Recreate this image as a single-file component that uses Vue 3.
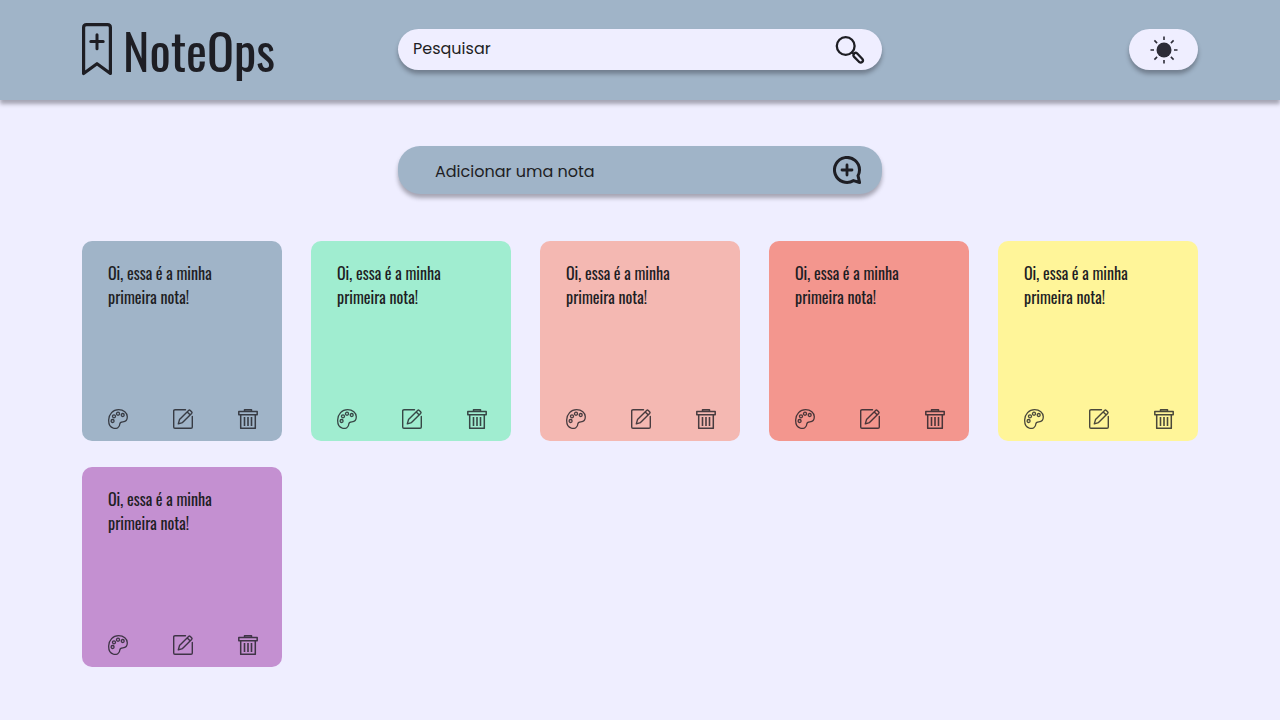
<script setup>
import { ref } from 'vue'

const search = ref('')
const colors = ['blue', 'green', 'pink', 'red', 'yellow', 'purple']
const notes = ref(colors.map((color, i) => ({ id: i + 1, color, text: 'Oi, essa é a minha primeira nota!' })))

function removeNote(id) {
  notes.value = notes.value.filter((note) => note.id !== id)
}
</script>

<template>
  <div class="page">
    <header class="header">
      <a class="brand" href="#">
        <svg class="brand-mark" viewBox="0 0 30 54" fill="none" stroke="currentColor" stroke-linejoin="round" stroke-linecap="round" aria-hidden="true">
          <path d="M1.600 50.500V4.600q0-3 3-3h20.800q3 0 3 3v45.900L15 40.700Z" stroke-width="3.200" />
          <path d="M15 11.700v14M8.800 18.500h12.400" stroke-width="3" />
        </svg>
        <span class="brand-name">NoteOps</span>
      </a>
      <form class="search" role="search" @submit.prevent>
        <input v-model="search" type="text" placeholder="Pesquisar" aria-label="Pesquisar" />
        <button type="submit" aria-label="Buscar">
          <svg width="30" height="30" viewBox="0 0 30 30" fill="none" stroke="currentColor" stroke-width="2.300" stroke-linecap="round" stroke-linejoin="round" aria-hidden="true">
            <circle cx="10.700" cy="11" r="8.900" />
            <path d="M17 17.500l1.800 1.800M19.300 18.200q1.500-1 2.700.1l5.200 5.500q1.500 1.800.1 3.100t-3.100.1l-5.300-5.400q-1.200-1.600.4-3.400Z" />
          </svg>
        </button>
      </form>
      <button class="theme" type="button" aria-label="Alternar tema">
        <svg width="28" height="28" viewBox="0 0 28 28" aria-hidden="true">
          <circle cx="14" cy="14" r="7.500" fill="currentColor" />
          <path d="M14 .5v3.500M14 24v3.500M.5 14H4M24 14h3.500M4.400 4.400l2.700 2.700M20.900 20.900l2.700 2.700M4.400 23.600l2.700-2.700M20.900 7.100l2.700-2.700" fill="none" stroke="currentColor" stroke-width="1.600" />
        </svg>
      </button>
    </header>

    <main class="content">
      <button class="add" type="button">
        <span>Adicionar uma nota</span>
        <svg width="28" height="28" viewBox="0 0 28 28" fill="none" stroke="currentColor" stroke-linecap="round" stroke-linejoin="round" aria-hidden="true">
          <path d="M26.500 14A12.500 12.500 0 1 0 20.500 24.600L26.600 26.500 25 19.700Q26.500 17 26.500 14Z" stroke-width="3" />
          <path d="M14 9v10M9 14h10" stroke-width="2.800" />
        </svg>
      </button>

      <section class="notes" aria-label="Notas">
        <article v-for="note in notes" :key="note.id" class="note" :class="note.color">
          <p>{{ note.text }}</p>
          <div class="actions">
            <button type="button" aria-label="Mudar cor">
              <svg viewBox="0 0 20 20" fill="none" stroke="currentColor" stroke-width="1.300" aria-hidden="true">
                <path d="M5.400 19.200C1.500 18 .5 14 .7 10.800 1 5.200 4.800.7 10.600.7c5 0 8.700 3.200 8.700 7.100 0 3.300-1.400 5-4.400 5-2.200 0-3.100.5-3.100 2.300 0 3.200-3.100 5-6.400 4.100Z" />
                <circle cx="4.600" cy="12" r="1.500" />
                <circle cx="6" cy="7.300" r="1.500" />
                <circle cx="10" cy="4.700" r="1.500" />
                <circle cx="14.700" cy="6" r="1.500" />
              </svg>
            </button>
            <button type="button" aria-label="Editar nota">
              <svg viewBox="0 0 20 20" fill="none" stroke="currentColor" stroke-width="1.400" stroke-linejoin="round" stroke-linecap="round" aria-hidden="true">
                <path d="M12.500.8H2Q.7.800.7 2v16q0 1.300 1.300 1.300h16q1.300 0 1.300-1.300V7.500" />
                <path d="M5.300 14.900l1.200-4.300L15.600 1.400q.8-.8 1.700 0l1.300 1.300q.8.8 0 1.700L9.500 13.600ZM14.200 2.900l2.900 2.900" />
              </svg>
            </button>
            <button type="button" aria-label="Excluir nota" @click="removeNote(note.id)">
              <svg viewBox="0 0 20 20" fill="none" stroke="currentColor" stroke-width="1.500" stroke-linejoin="round" aria-hidden="true">
                <path d="M6.500 2.500V.8h7v1.700M.8 2.500h18.400v3.200H.8ZM2.700 5.700v13.600h14.600V5.700" />
                <path d="M6.500 8v9M10 8v9M13.500 8v9" stroke-width="1.600" />
              </svg>
            </button>
          </div>
        </article>
      </section>
    </main>
  </div>
</template>

<style>
body {
  margin: 0;
  background: #efeeff;
}
</style>

<style scoped>
.page {
  min-height: 100vh;
  color: #1e1e24;
  font-family: Poppins, "Noto Sans", sans-serif;
  font-size: 16px;
}
button {
  border: 0;
  padding: 0;
  background: none;
  color: inherit;
  font: inherit;
  cursor: pointer;
}
svg {
  display: block;
}
.header {
  display: grid;
  grid-template-columns: 1fr minmax(240px, 484px) 1fr;
  align-items: center;
  min-height: 99px;
  padding: 0 82px 1px;
  background: #a0b4c8;
  box-shadow: 0 4px 4px rgba(30, 30, 36, 0.35);
}
.brand {
  display: flex;
  align-items: center;
  gap: 11px;
  color: inherit;
  text-decoration: none;
}
.brand-mark {
  width: 30px;
  height: 54px;
}
.brand-name {
  padding-bottom: 2px;
  font-family: Oswald, "Noto Sans CJK SC", sans-serif;
  font-size: 50px;
  line-height: 56px;
}
.search {
  display: flex;
  align-items: center;
  height: 41px;
  box-sizing: border-box;
  padding: 0 17px 0 15px;
  border-radius: 21px;
  background: #efeeff;
  box-shadow: 0 4px 4px rgba(30, 30, 36, 0.35);
}
.search input {
  flex: 1;
  min-width: 0;
  border: 0;
  padding: 0 0 2px;
  outline: 0;
  background: none;
  color: inherit;
  font: inherit;
}
.search input::placeholder {
  color: #1e1e24;
  opacity: 1;
}
.theme {
  display: grid;
  place-items: center;
  justify-self: end;
  width: 69px;
  height: 41px;
  border-radius: 21px;
  background: #efeeff;
  color: #2c2c37;
  box-shadow: 0 4px 4px rgba(30, 30, 36, 0.35);
}
.content {
  padding: 46px 82px 53px;
}
.add {
  display: flex;
  align-items: center;
  justify-content: space-between;
  width: 100%;
  max-width: 484px;
  height: 48px;
  margin: 0 auto 47px;
  padding: 0 21px 0 37px;
  border-radius: 22px;
  background: #a0b4c8;
  box-shadow: 0 4px 4px rgba(30, 30, 36, 0.35);
}
.add span {
  padding-top: 2px;
}
.notes {
  display: grid;
  grid-template-columns: repeat(auto-fill, 200px);
  justify-content: space-between;
  gap: 26px 24px;
}
.note {
  display: flex;
  flex-direction: column;
  justify-content: space-between;
  min-height: 200px;
  box-sizing: border-box;
  padding: 20px 24px 12px 26px;
  border-radius: 10px;
}
.note p {
  margin: 0;
  font-family: Oswald, "Noto Sans CJK SC", sans-serif;
  font-size: 16px;
  line-height: 24px;
}
.actions {
  display: flex;
  justify-content: space-between;
  opacity: 0.8;
}
.actions svg {
  width: 20px;
  height: 20px;
}
.blue { background: #a0b4c8; }
.green { background: #a0edd0; }
.pink { background: #f4b8b2; }
.red { background: #f3968e; }
.yellow { background: #fff599; }
.purple { background: #c490d1; }
</style>
